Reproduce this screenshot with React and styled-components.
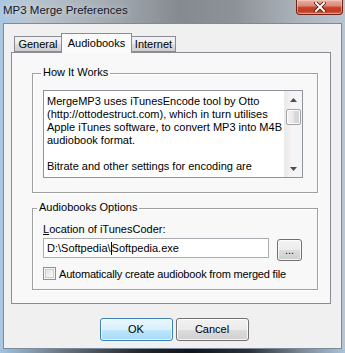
import React from "react";
import styled, { createGlobalStyle } from "styled-components";

const Global = createGlobalStyle`
  html, body { margin: 0; padding: 0; background: #fff; }
  body { font-family: "Liberation Sans", Arial, sans-serif; font-size: 11px; color: #000; }
  #root { width: 345px; height: 353px; }
`;

const Window = styled.div`
  width: 345px;
  height: 353px;
  box-sizing: border-box;
  display: flex;
  flex-direction: column;
  padding: 0 3px 0 3px;
  overflow: hidden;
  background: linear-gradient(to right, #a9c7e2 0, #b9c5d0 8%, #a6adb4 30%, #858a90 52%, #8d9298 68%, #a9b0b7 85%, #b8c6d3 100%);
`;

const TitleBar = styled.div`
  height: 23px;
  flex: none;
  display: flex;
  align-items: flex-start;
`;

const TitleText = styled.span`
  font-size: 11.5px;
  color: #14182a;
  margin-top: 4px;
  text-shadow: 0 0 6px rgba(255,255,255,0.6);
`;

const CloseButton = styled.div`
  margin-left: auto;
  margin-right: -1px;
  width: 47px;
  height: 15px;
  box-sizing: border-box;
  border: 1px solid #6e2418;
  border-top: none;
  border-radius: 0 0 4px 4px;
  background: linear-gradient(to bottom, #e9b2a4 0, #dc8a74 40%, #c8412a 55%, #c23a22 80%, #d8705a 100%);
  box-shadow: inset 0 0 0 1px rgba(255,220,210,0.45);
  display: flex;
  align-items: center;
  justify-content: center;
`;

const Client = styled.div`
  flex: 1;
  background: #f0f0f0;
  border: 1px solid #7b8b9b;
  padding: 9px 0 0 7px;
  display: flex;
  flex-direction: column;
`;

const TabStrip = styled.div`
  display: flex;
  align-items: flex-end;
  height: 20px;
  padding-left: 3px;
  margin-bottom: -1px;
  position: relative;
  z-index: 1;
`;

const Tab = styled.div`
  box-sizing: border-box;
  width: ${(p) => p.$w}px;
  height: ${(p) => (p.$active ? 20 : 16)}px;
  margin-bottom: ${(p) => (p.$active ? 0 : 1)}px;
  margin-left: ${(p) => (p.$first ? 0 : -1)}px;
  border: 1px solid #898c95;
  border-bottom: ${(p) => (p.$active ? "none" : "1px solid #898c95")};
  background: ${(p) =>
    p.$active ? "#fbfbfb" : "linear-gradient(to bottom, #f3f3f3 0, #ebebeb 50%, #dddddd 51%, #cfcfcf 100%)"};
  display: flex;
  align-items: ${(p) => (p.$active ? "flex-start" : "center")};
  justify-content: center;
  padding-top: ${(p) => (p.$active ? 3 : 0)}px;
  position: relative;
  z-index: ${(p) => (p.$active ? 2 : 1)};
  font-size: 11px;
`;

const Pane = styled.div`
  box-sizing: border-box;
  width: 320px;
  height: 252px;
  border: 1px solid #898c95;
  background: #f8f8f8;
  padding: 20px 0 0 20px;
  display: flex;
  flex-direction: column;
`;

const Group = styled.div`
  position: relative;
  box-sizing: border-box;
  width: 286px;
  height: ${(p) => p.$h}px;
  margin-bottom: ${(p) => p.$mb || 0}px;
  border: 1px solid #a0a0a0;
  box-shadow: inset 1px 1px 0 #fff, 1px 1px 0 #fff;
  padding: ${(p) => p.$pad};
  display: flex;
  flex-direction: column;
`;

const Legend = styled.span`
  position: absolute;
  top: -8px;
  left: ${(p) => p.$x}px;
  padding: 0 2px;
  background: #f8f8f8;
  line-height: 13px;
  font-size: 11px;
`;

const TextBox = styled.div`
  box-sizing: border-box;
  width: 260px;
  height: 88px;
  border: 1px solid #8e9299;
  background: #fff;
  display: flex;
`;

const TextContent = styled.div`
  flex: 1;
  padding: 4px 0 0 3px;
  line-height: 13px;
  white-space: pre;
  overflow: hidden;
`;

const ScrollBar = styled.div`
  width: 17px;
  flex: none;
  background: linear-gradient(to right, #e9e9e9, #f5f5f5 40%, #f5f5f5);
  border-left: 1px solid #ececec;
  display: flex;
  flex-direction: column;
  align-items: center;
`;

const ArrowBtn = styled.div`
  width: 17px;
  height: ${(p) => p.$h}px;
  display: flex;
  align-items: center;
  justify-content: center;
`;

const Thumb = styled.div`
  box-sizing: border-box;
  width: 15px;
  height: 16px;
  margin-top: 1px;
  border: 1px solid #a3a3a3;
  border-radius: 2px;
  background: linear-gradient(to right, #f3f3f3, #e8e8e8 50%, #dadada 51%, #d3d3d3);
  box-shadow: inset 0 0 0 1px #fcfcfc;
`;

const Spacer = styled.div`
  flex: 1;
`;

const Label = styled.div`
  line-height: 13px;
  height: 13px;
  margin-bottom: 2px;
`;

const Row = styled.div`
  display: flex;
  align-items: flex-start;
  height: 23px;
`;

const Edit = styled.div`
  box-sizing: border-box;
  width: 226px;
  height: 20px;
  border: 1px solid #abadb3;
  background: #fff;
  padding: 3px 0 0 3px;
  line-height: 13px;
  white-space: pre;
  display: flex;
`;

const Caret = styled.span`
  display: inline-block;
  width: 0;
  height: 13px;
  border-left: 1px solid #000;
`;

const PushButton = styled.div`
  box-sizing: border-box;
  width: ${(p) => p.$w}px;
  height: ${(p) => p.$h}px;
  margin-top: ${(p) => p.$mt || 0}px;
  margin-left: ${(p) => p.$ml || 0}px;
  border: 1px solid ${(p) => (p.$default ? "#3c7fb1" : "#707070")};
  border-radius: 3px;
  background: ${(p) =>
    p.$default
      ? "linear-gradient(to bottom, #eaf6fd 0, #d9f0fc 50%, #bee6fd 51%, #a7d9f5 100%)"
      : "linear-gradient(to bottom, #f2f2f2 0, #ebebeb 50%, #dddddd 51%, #cfcfcf 100%)"};
  box-shadow: inset 0 0 0 1px ${(p) => (p.$default ? "rgba(255,255,255,0.7)" : "rgba(255,255,255,0.8)")};
  display: flex;
  align-items: center;
  justify-content: center;
  font-size: 11px;
  line-height: 13px;
`;

const CheckRow = styled.div`
  display: flex;
  align-items: center;
  margin-top: 6px;
  height: 13px;
`;

const CheckBox = styled.div`
  box-sizing: border-box;
  width: 13px;
  height: 13px;
  border: 1px solid #8f8f8f;
  background: linear-gradient(135deg, #dcdcdc, #fefefe);
  box-shadow: inset 0 0 0 1px #f4f4f4, inset 0 0 0 2px #cfcfcf;
  margin-right: 3px;
`;

const CheckLabel = styled.span`
  letter-spacing: -0.18px;
`;

const ButtonBar = styled.div`
  display: flex;
  justify-content: center;
  gap: 3px;
  margin-top: 14px;
  padding-right: 4px;
`;

const BottomFrame = styled.div`
  height: 4px;
  flex: none;
  margin: 0 -3px;
  background: linear-gradient(to right, #a2c3de 0, #6c7580 18%, #25282c 40%, #131517 55%, #2c3036 72%, #7f8c98 88%, #a9c2d8 100%);
`;

const Underline = styled.span`
  text-decoration: underline;
`;

const lines = [
  "MergeMP3 uses iTunesEncode tool by Otto",
  "(http://ottodestruct.com), which in turn utilises",
  "Apple iTunes software, to convert MP3 into M4B",
  "audiobook format.",
  "",
  "Bitrate and other settings for encoding are",
];

export default function App() {
  return (
    <>
      <Global />
      <Window>
        <TitleBar>
          <TitleText>MP3 Merge Preferences</TitleText>
          <CloseButton>
            <svg width="12" height="10" viewBox="0 0 12 10">
              <path d="M2 1 L10 9 M10 1 L2 9" stroke="#4a1810" strokeWidth="3.6" strokeLinecap="square" />
              <path d="M2 1 L10 9 M10 1 L2 9" stroke="#fff" strokeWidth="2" strokeLinecap="square" />
            </svg>
          </CloseButton>
        </TitleBar>
        <Client>
          <TabStrip>
            <Tab $w={48} $first>General</Tab>
            <Tab $w={71} $active>Audiobooks</Tab>
            <Tab $w={45}>Internet</Tab>
          </TabStrip>
          <Pane>
            <Group $h={120} $mb={15} $pad="16px 0 0 10px">
              <Legend $x={8}>How It Works</Legend>
              <TextBox>
                <TextContent>
                  {lines.map((l, i) => (
                    <div key={i}>{l || " "}</div>
                  ))}
                </TextContent>
                <ScrollBar>
                  <ArrowBtn $h={17}>
                    <svg width="7" height="4" viewBox="0 0 7 4">
                      <path d="M0 4 L3.5 0 L7 4 Z" fill="#4d4d4d" />
                    </svg>
                  </ArrowBtn>
                  <Thumb />
                  <Spacer />
                  <ArrowBtn $h={17}>
                    <svg width="7" height="4" viewBox="0 0 7 4">
                      <path d="M0 0 L3.5 4 L7 0 Z" fill="#4d4d4d" />
                    </svg>
                  </ArrowBtn>
                </ScrollBar>
              </TextBox>
            </Group>
            <Group $h={82} $pad="14px 0 0 10px">
              <Legend $x={4}>Audiobooks Options</Legend>
              <Label>
                <Underline>L</Underline>ocation of iTunesCoder:
              </Label>
              <Row>
                <Edit>
                  D:\Softpedia\<Caret />Softpedia.exe
                </Edit>
                <PushButton $w={25} $h={22} $mt={1} $ml={8}>...</PushButton>
              </Row>
              <CheckRow>
                <CheckBox />
                <CheckLabel>Automatically create audiobook from merged file</CheckLabel>
              </CheckRow>
            </Group>
          </Pane>
          <ButtonBar>
            <PushButton $w={73} $h={23} $default>OK</PushButton>
            <PushButton $w={73} $h={23}>Cancel</PushButton>
          </ButtonBar>
        </Client>
        <BottomFrame />
      </Window>
    </>
  );
}
